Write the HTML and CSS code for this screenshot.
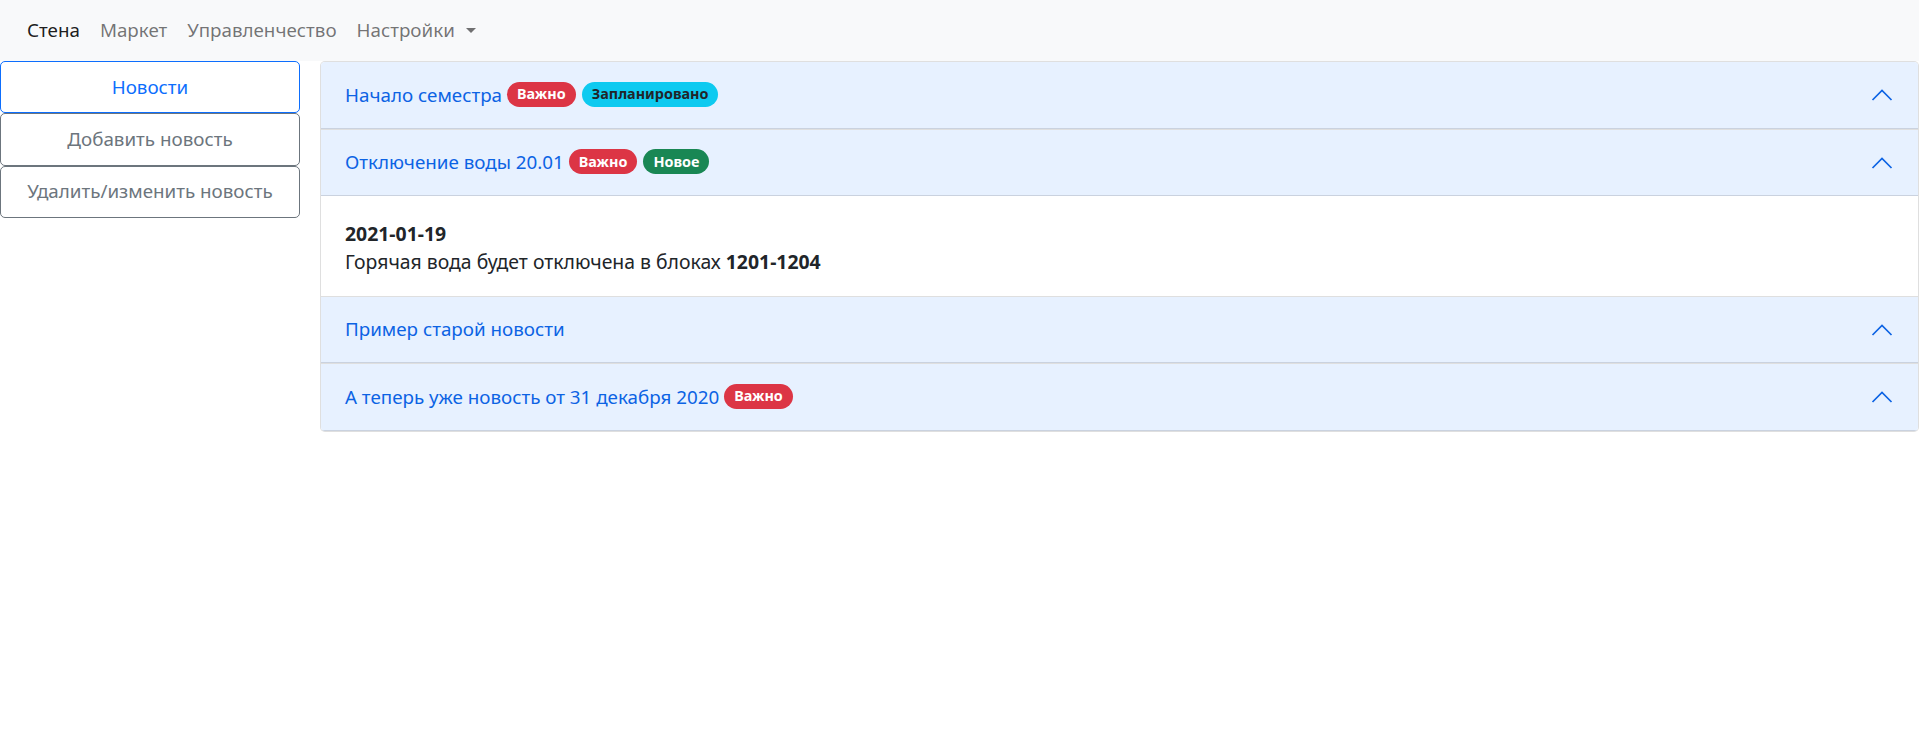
FILE: index.html
```html
<!DOCTYPE html>
<html lang="ru">
<head>
<meta charset="utf-8">
<title>Стена</title>
<link rel="stylesheet" href="styles.css">
</head>
<body>
<nav class="navbar">
  <a class="nav-link active" href="#">Стена</a>
  <a class="nav-link" href="#">Маркет</a>
  <a class="nav-link" href="#">Управленчество</a>
  <a class="nav-link dropdown-toggle" href="#">Настройки</a>
</nav>
<div class="layout">
  <aside class="side">
    <button class="side-btn primary">Новости</button>
    <button class="side-btn">Добавить новость</button>
    <button class="side-btn">Удалить/изменить новость</button>
  </aside>
  <main class="accordion">
    <section class="acc-item">
      <div class="acc-header">
        <span class="acc-title">Начало семестра</span>
        <span class="badge red">Важно</span>
        <span class="badge cyan">Запланировано</span>
        <svg class="chev" viewBox="0 0 24 24" width="24" height="24"><polyline points="2.5,17 12,7.5 21.5,17" fill="none" stroke="#0c63e4" stroke-width="1.7"/></svg>
      </div>
    </section>
    <section class="acc-item">
      <div class="acc-header">
        <span class="acc-title">Отключение воды 20.01</span>
        <span class="badge red">Важно</span>
        <span class="badge green">Новое</span>
        <svg class="chev" viewBox="0 0 24 24" width="24" height="24"><polyline points="2.5,17 12,7.5 21.5,17" fill="none" stroke="#0c63e4" stroke-width="1.7"/></svg>
      </div>
      <div class="acc-body">
        <div class="line"><b>2021-01-19</b></div>
        <div class="line">Горячая вода будет отключена в блоках <b>1201-1204</b></div>
      </div>
    </section>
    <section class="acc-item">
      <div class="acc-header">
        <span class="acc-title">Пример старой новости</span>
        <svg class="chev" viewBox="0 0 24 24" width="24" height="24"><polyline points="2.5,17 12,7.5 21.5,17" fill="none" stroke="#0c63e4" stroke-width="1.7"/></svg>
      </div>
    </section>
    <section class="acc-item">
      <div class="acc-header">
        <span class="acc-title">А теперь уже новость от 31 декабря 2020</span>
        <span class="badge red">Важно</span>
        <svg class="chev" viewBox="0 0 24 24" width="24" height="24"><polyline points="2.5,17 12,7.5 21.5,17" fill="none" stroke="#0c63e4" stroke-width="1.7"/></svg>
      </div>
    </section>
  </main>
</div>
</body>
</html>
```
FILE: styles.css
```css
* { box-sizing: border-box; }
html, body { margin: 0; padding: 0; }
body {
  font-family: "Noto Sans", "Open Sans", sans-serif;
  font-size: 18.8px;
  line-height: 28.8px;
  color: #212529;
  background: #fff;
}

.navbar {
  display: flex;
  align-items: center;
  height: 61px;
  padding: 0 17px;
  background: #f8f9fa;
}
.nav-link {
  padding: 0 10px;
  color: rgba(0,0,0,.55);
  text-decoration: none;
}
.nav-link.active { color: rgba(0,0,0,.9); }
.dropdown-toggle::after {
  content: "";
  display: inline-block;
  margin-left: 11px;
  vertical-align: 4px;
  border-top: 5.7px solid;
  border-left: 5.4px solid transparent;
  border-right: 5.4px solid transparent;
}

.layout {
  display: flex;
  gap: 20px;
}
.side {
  width: 300px;
  flex: none;
  display: flex;
  flex-direction: column;
}
.side-btn {
  height: 52.3px;
  font: inherit;
  line-height: 28.8px;
  background: #fff;
  color: #6c757d;
  border: 1px solid #6c757d;
  border-radius: 5px;
  text-align: center;
  padding: 0 12px;
}
.side-btn.primary {
  color: #0d6efd;
  border-color: #0d6efd;
}

.accordion {
  flex: 1;
  min-width: 0;
}
.acc-item {
  border: 1px solid rgba(0,0,0,.125);
  background: #fff;
}
.acc-item + .acc-item { border-top: 0; }
.acc-item:first-child { border-radius: 5px 5px 0 0; overflow: hidden; }
.acc-item:last-child { border-radius: 0 0 5px 5px; overflow: hidden; }

.acc-header {
  display: flex;
  align-items: center;
  height: 66.5px;
  padding: 0 24px 0 24px;
  background: #e7f1ff;
  color: #0c63e4;
  box-shadow: inset 0 -1px 0 rgba(0,0,0,.125);
}
.acc-title { margin-right: 5px; }
.badge {
  display: inline-block;
  font-size: 14.4px;
  font-weight: 700;
  line-height: 1;
  padding: 5.5px 10px;
  border-radius: 50px;
  color: #fff;
  margin-right: 6px;
  margin-top: -2px;
}
.badge.red { background: #dc3545; }
.badge.cyan { background: #0dcaf0; color: #212529; }
.badge.green { background: #198754; }
.chev { margin-left: auto; flex: none; }

.acc-body {
  padding: 23.5px 24px 18.5px;
  font-size: 19.4px;
  line-height: 28.8px;
}
.line b { font-weight: 700; }
```
